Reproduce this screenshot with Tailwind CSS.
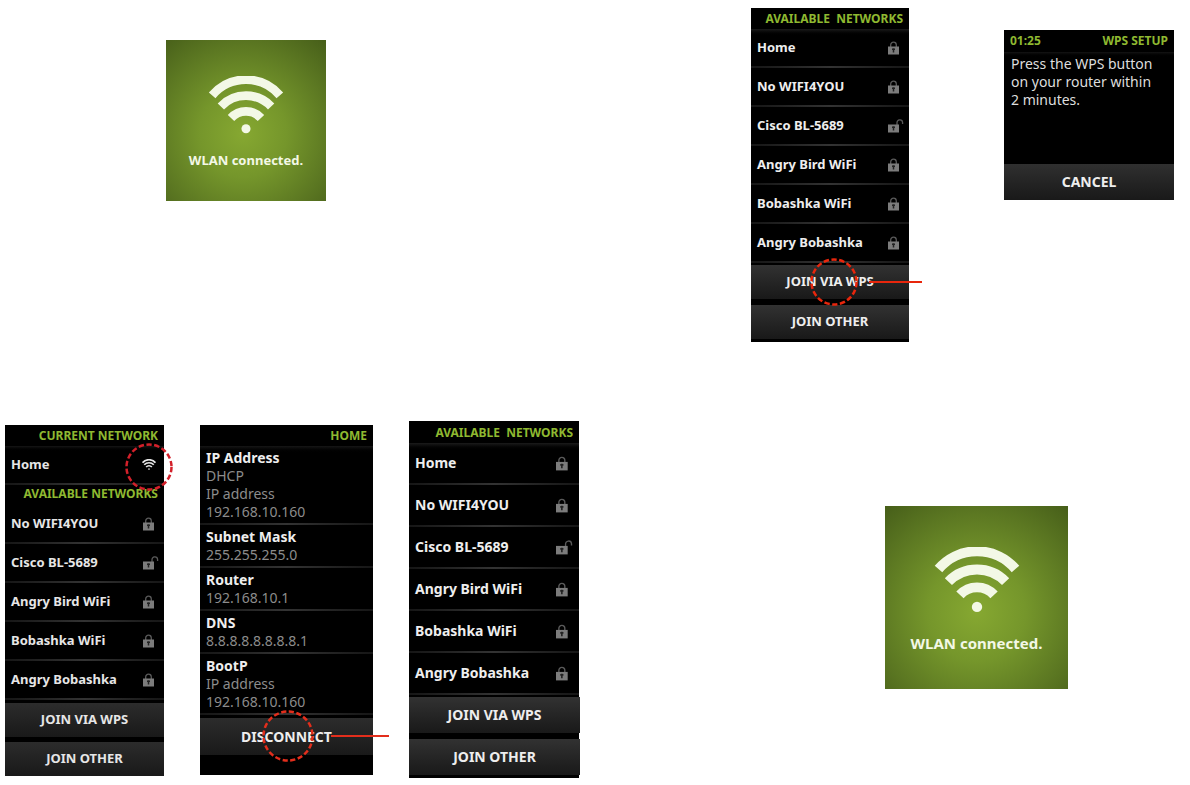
<!DOCTYPE html>
<html lang="en">
<head>
    <meta charset="UTF-8">
    <meta name="viewport" content="width=device-width, initial-scale=1.0">
    <title>WLAN setup screens</title>
    <script src="https://cdn.jsdelivr.net/npm/@tailwindcss/browser@4"></script>
</head>
<body class="bg-white font-['Noto_Sans',sans-serif]">
    <svg class="hidden">
        <symbol id="wifi" viewBox="0 0 76 60">
            <g fill="none" stroke="currentColor" stroke-width="9">
                <path d="M3 20A46 46 0 0 1 73 20"/>
                <path d="M12 31.5A36 36 0 0 1 64 31.5"/>
                <path d="M22.5 43.5A21 21 0 0 1 53.5 43.5"/>
            </g>
            <circle cx="38" cy="54.5" r="4.7" fill="currentColor"/>
        </symbol>
        <symbol id="lock" viewBox="0 0 16 14">
            <path d="M2.7 6V4A2.8 2.8 0 0 1 8.3 4V6" fill="none" stroke="#5a5a5a" stroke-width="1.3"/>
            <path d="M0 5.5H11V13.5H0Z" fill="#7c7c7c"/>
            <path d="M5.5 7.2V11.5M4 8.3H7" stroke="#222" stroke-width="1.5"/>
        </symbol>
        <symbol id="unlock" viewBox="0 0 16 14">
            <path d="M9 6V4A2.8 2.8 0 0 1 14.6 3.5V5" fill="none" stroke="#5a5a5a" stroke-width="1.3"/>
            <path d="M0 5.5H11V13.5H0Z" fill="#7c7c7c"/>
            <path d="M5.5 7.2V11.5M4 8.3H7" stroke="#222" stroke-width="1.5"/>
        </symbol>
    </svg>

    <main>
        <div class="flex items-start justify-between pt-2 pl-[166px] pr-4">
            <section class="mt-8 flex h-[161px] w-40 flex-col items-center bg-[radial-gradient(circle_at_48%_58%,#86a831_0%,#75962b_35%,#5c7822_70%,#465e19_100%)] pt-9 text-[#f3f8e6]">
                <svg class="h-[58px] w-[76px]"><use href="#wifi"/></svg>
                <p class="mt-4 text-[13px] leading-5 font-bold">WLAN connected.</p>
            </section>

            <div class="flex items-start gap-[95px]">
                <section class="w-[158px] bg-black pb-[3px] text-[13px] font-bold text-[#eee]">
                    <h2 class="h-[21px] pr-1.5 text-right text-xs leading-[22px] whitespace-pre text-[#8fb931]">AVAILABLE  NETWORKS</h2>
                    <button class="flex h-[37px] w-full items-center justify-between bg-linear-to-b from-[#1b1b1b] to-black to-20% pr-[5px] pl-1.5">Home<svg class="h-3.5 w-4"><use href="#lock"/></svg></button>
                    <hr class="h-0.5 border-0 bg-linear-to-r from-[#161616] via-[#333] to-[#161616]">
                    <button class="flex h-[37px] w-full items-center justify-between pr-[5px] pl-1.5">No WIFI4YOU<svg class="h-3.5 w-4"><use href="#lock"/></svg></button>
                    <hr class="h-0.5 border-0 bg-linear-to-r from-[#161616] via-[#333] to-[#161616]">
                    <button class="flex h-[37px] w-full items-center justify-between pr-[5px] pl-1.5">Cisco BL-5689<svg class="h-3.5 w-4"><use href="#unlock"/></svg></button>
                    <hr class="h-0.5 border-0 bg-linear-to-r from-[#161616] via-[#333] to-[#161616]">
                    <button class="flex h-[37px] w-full items-center justify-between pr-[5px] pl-1.5">Angry Bird WiFi<svg class="h-3.5 w-4"><use href="#lock"/></svg></button>
                    <hr class="h-0.5 border-0 bg-linear-to-r from-[#161616] via-[#333] to-[#161616]">
                    <button class="flex h-[37px] w-full items-center justify-between pr-[5px] pl-1.5">Bobashka WiFi<svg class="h-3.5 w-4"><use href="#lock"/></svg></button>
                    <hr class="h-0.5 border-0 bg-linear-to-r from-[#161616] via-[#333] to-[#161616]">
                    <button class="flex h-[37px] w-full items-center justify-between pr-[5px] pl-1.5">Angry Bobashka<svg class="h-3.5 w-4"><use href="#lock"/></svg></button>
                    <hr class="h-0.5 border-0 bg-linear-to-r from-[#161616] via-[#333] to-[#161616]">
                    <div class="relative mt-0.5">
                        <button class="h-[34px] w-full bg-linear-to-b from-[#323232] to-[#191919]">JOIN VIA WPS</button>
                        <svg class="absolute -top-2 left-[58px] h-[50px] w-[114px] text-[#e8260c]" fill="none" stroke="currentColor" stroke-width="2.5">
                            <circle cx="25" cy="25" r="22.5" stroke-dasharray="5.4 2.5"/>
                            <path d="M60 25H113" stroke-width="2"/>
                        </svg>
                    </div>
                    <button class="mt-1.5 h-[34px] w-full bg-linear-to-b from-[#323232] to-[#191919]">JOIN OTHER</button>
                </section>

                <section class="mt-[22px] flex h-[170px] w-[170px] flex-col bg-black text-[#ddd]">
                    <header class="flex h-[22px] items-center justify-between px-1.5 text-xs font-bold text-[#8fb931]">
                        <span>01:25</span>
                        <h2>WPS SETUP</h2>
                    </header>
                    <p class="grow bg-linear-to-b from-[#141414] to-black to-5% pt-[3px] pl-[7px] text-sm leading-[18px]">Press the WPS button<br>on your router within<br>2 minutes.</p>
                    <button class="h-9 bg-linear-to-b from-[#303030] to-[#191919] text-sm font-bold text-[#eee]">CANCEL</button>
                </section>
            </div>
        </div>

        <div class="mt-[79px] flex items-start justify-between pr-[122px] pl-[5px]">
            <div class="flex items-start">
                <section class="mt-1 w-[159px] bg-black text-[13px] font-bold text-[#e6e6e6]">
                    <h2 class="h-[21px] pr-1.5 text-right text-xs leading-[22px] text-[#8fb931]">CURRENT NETWORK</h2>
                    <div class="relative">
                        <button class="flex h-[37px] w-full items-center justify-between bg-linear-to-b from-[#161616] to-black to-15% pr-2 pl-1.5">Home<svg class="h-[11px] w-3.5"><use href="#wifi"/></svg></button>
                        <svg class="absolute -top-1 left-[119px] size-[50px] text-[#d3202a]" fill="none" stroke="currentColor" stroke-width="2.5">
                            <circle cx="25" cy="25" r="22.5" stroke-dasharray="5.4 2.5"/>
                        </svg>
                    </div>
                    <hr class="h-0.5 border-0 bg-linear-to-r from-[#161616] via-[#333] to-[#161616]">
                    <h2 class="h-5 pr-1.5 text-right text-xs leading-[18px] text-[#8fb931]">AVAILABLE NETWORKS</h2>
                    <button class="flex h-[37px] w-full items-center justify-between pr-[5px] pl-1.5">No WIFI4YOU<svg class="h-3.5 w-4"><use href="#lock"/></svg></button>
                    <hr class="h-0.5 border-0 bg-linear-to-r from-[#161616] via-[#333] to-[#161616]">
                    <button class="flex h-[37px] w-full items-center justify-between pr-[5px] pl-1.5">Cisco BL-5689<svg class="h-3.5 w-4"><use href="#unlock"/></svg></button>
                    <hr class="h-0.5 border-0 bg-linear-to-r from-[#161616] via-[#333] to-[#161616]">
                    <button class="flex h-[37px] w-full items-center justify-between pr-[5px] pl-1.5">Angry Bird WiFi<svg class="h-3.5 w-4"><use href="#lock"/></svg></button>
                    <hr class="h-0.5 border-0 bg-linear-to-r from-[#161616] via-[#333] to-[#161616]">
                    <button class="flex h-[37px] w-full items-center justify-between pr-[5px] pl-1.5">Bobashka WiFi<svg class="h-3.5 w-4"><use href="#lock"/></svg></button>
                    <hr class="h-0.5 border-0 bg-linear-to-r from-[#161616] via-[#333] to-[#161616]">
                    <button class="flex h-[37px] w-full items-center justify-between pr-[5px] pl-1.5">Angry Bobashka<svg class="h-3.5 w-4"><use href="#lock"/></svg></button>
                    <hr class="h-0.5 border-0 bg-linear-to-r from-[#161616] via-[#333] to-[#161616]">
                    <button class="mt-[3px] h-[34px] w-full bg-linear-to-b from-[#2c2c2c] to-[#191919]">JOIN VIA WPS</button>
                    <button class="mt-[5px] h-[34px] w-full bg-linear-to-b from-[#2c2c2c] to-[#191919]">JOIN OTHER</button>
                </section>

                <section class="mt-1 ml-9 w-[173px] bg-black pb-5 text-sm leading-[18px] text-[#8c8c8c]">
                    <h2 class="h-[21px] pr-1.5 text-right text-xs leading-[22px] font-bold text-[#8fb931]">HOME</h2>
                    <dl>
                        <div class="bg-linear-to-b from-[#161616] to-black to-10% px-1.5 pt-[3px] pb-0.5">
                            <dt class="font-bold text-[#eee]">IP Address</dt>
                            <dd>DHCP</dd>
                            <dd>IP address</dd>
                            <dd>192.168.10.160</dd>
                        </div>
                        <hr class="h-0.5 border-0 bg-linear-to-r from-[#161616] via-[#333] to-[#161616]">
                        <div class="px-1.5 pt-[3px] pb-0.5">
                            <dt class="font-bold text-[#eee]">Subnet Mask</dt>
                            <dd>255.255.255.0</dd>
                        </div>
                        <hr class="h-0.5 border-0 bg-linear-to-r from-[#161616] via-[#333] to-[#161616]">
                        <div class="px-1.5 pt-[3px] pb-0.5">
                            <dt class="font-bold text-[#eee]">Router</dt>
                            <dd>192.168.10.1</dd>
                        </div>
                        <hr class="h-0.5 border-0 bg-linear-to-r from-[#161616] via-[#333] to-[#161616]">
                        <div class="px-1.5 pt-[3px] pb-0.5">
                            <dt class="font-bold text-[#eee]">DNS</dt>
                            <dd>8.8.8.8.8.8.8.8.1</dd>
                        </div>
                        <hr class="h-0.5 border-0 bg-linear-to-r from-[#161616] via-[#333] to-[#161616]">
                        <div class="px-1.5 pt-[3px] pb-0.5">
                            <dt class="font-bold text-[#eee]">BootP</dt>
                            <dd>IP address</dd>
                            <dd>192.168.10.160</dd>
                        </div>
                        <hr class="h-0.5 border-0 bg-linear-to-r from-[#161616] via-[#333] to-[#161616]">
                    </dl>
                    <div class="relative mt-[3px]">
                        <button class="h-[37px] w-full bg-linear-to-b from-[#2c2c2c] to-[#191919] font-bold text-[#eee]">DISCONNECT</button>
                        <svg class="absolute -top-2 left-[61px] h-[54px] w-32 text-[#e32e1c]" fill="none" stroke="currentColor" stroke-width="2.5">
                            <circle cx="27" cy="26" r="24.5" stroke-dasharray="5.2 2.5"/>
                            <path d="M70 26H128" stroke-width="2"/>
                        </svg>
                    </div>
                </section>

                <section class="ml-9 w-[170px] bg-black pb-[3px] text-sm font-bold text-[#eee]">
                    <h2 class="h-[22px] pr-1.5 text-right text-xs leading-6 whitespace-pre text-[#8fb931]">AVAILABLE  NETWORKS</h2>
                    <button class="flex h-10 w-full items-center justify-between bg-linear-to-b from-[#1b1b1b] to-black to-20% px-1.5">Home<svg class="h-[15px] w-[17px]"><use href="#lock"/></svg></button>
                    <hr class="h-0.5 border-0 bg-linear-to-r from-[#161616] via-[#333] to-[#161616]">
                    <button class="flex h-10 w-full items-center justify-between px-1.5">No WIFI4YOU<svg class="h-[15px] w-[17px]"><use href="#lock"/></svg></button>
                    <hr class="h-0.5 border-0 bg-linear-to-r from-[#161616] via-[#333] to-[#161616]">
                    <button class="flex h-10 w-full items-center justify-between px-1.5">Cisco BL-5689<svg class="h-[15px] w-[17px]"><use href="#unlock"/></svg></button>
                    <hr class="h-0.5 border-0 bg-linear-to-r from-[#161616] via-[#333] to-[#161616]">
                    <button class="flex h-10 w-full items-center justify-between px-1.5">Angry Bird WiFi<svg class="h-[15px] w-[17px]"><use href="#lock"/></svg></button>
                    <hr class="h-0.5 border-0 bg-linear-to-r from-[#161616] via-[#333] to-[#161616]">
                    <button class="flex h-10 w-full items-center justify-between px-1.5">Bobashka WiFi<svg class="h-[15px] w-[17px]"><use href="#lock"/></svg></button>
                    <hr class="h-0.5 border-0 bg-linear-to-r from-[#161616] via-[#333] to-[#161616]">
                    <button class="flex h-10 w-full items-center justify-between px-1.5">Angry Bobashka<svg class="h-[15px] w-[17px]"><use href="#lock"/></svg></button>
                    <hr class="h-0.5 border-0 bg-linear-to-r from-[#161616] via-[#333] to-[#161616]">
                    <button class="mt-0.5 h-9 w-[171px] bg-linear-to-b from-[#323232] to-[#191919]">JOIN VIA WPS</button>
                    <button class="mt-1.5 h-9 w-[171px] bg-linear-to-b from-[#323232] to-[#191919]">JOIN OTHER</button>
                </section>
            </div>

            <section class="mt-[85px] flex h-[183px] w-[183px] flex-col items-center bg-[radial-gradient(circle_at_50%_58%,#86a831_0%,#75962b_35%,#5c7822_70%,#465e19_100%)] pt-[41px] text-[#f3f8e6]">
                <svg class="h-[66px] w-[86px]"><use href="#wifi"/></svg>
                <p class="mt-5 text-[15px] leading-5 font-bold">WLAN connected.</p>
            </section>
        </div>
    </main>
</body>
</html>
